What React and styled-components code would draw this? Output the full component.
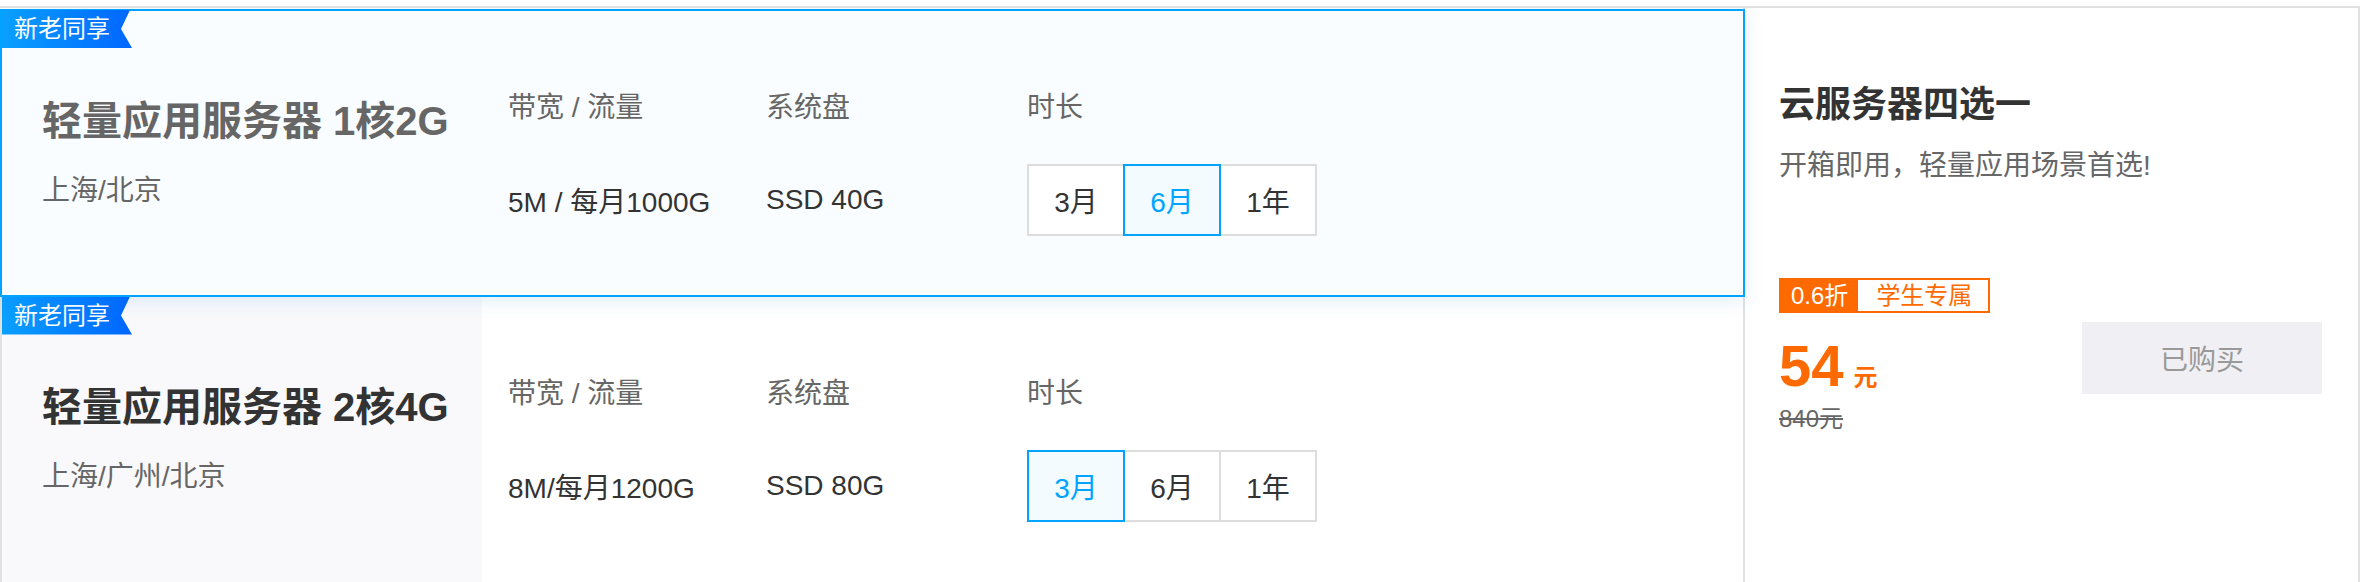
import React from "react";
import styled, { createGlobalStyle } from "styled-components";

const GlobalStyle = createGlobalStyle`
  body {
    margin: 0;
    background: #ffffff;
    font-family: "Liberation Sans", "Noto Sans CJK SC", sans-serif;
    color: #333333;
  }
`;

const Page = styled.div`
  display: flex;
  width: 2360px;
  height: 576px;
  margin-top: 6px;
  border-top: 2px solid #e1e1e1;
  box-sizing: border-box;
  overflow: hidden;
`;

const List = styled.div`
  display: flex;
  flex-direction: column;
  width: 1743px;
  flex-shrink: 0;
`;

const Card = styled.div`
  position: relative;
  display: flex;
  box-sizing: border-box;
  height: ${({ $active }) => ($active ? "289px" : "287px")};
  margin: ${({ $active }) => ($active ? "1px -2px 0 0" : "0")};
  border: ${({ $active }) => ($active ? "2px solid #00a4ff" : "none")};
  border-left: 2px solid ${({ $active }) => ($active ? "#00a4ff" : "#e1e1e1")};
  background: ${({ $active }) => ($active ? "#fafdff" : "#ffffff")};
  box-shadow: ${({ $active }) => ($active ? "0 4px 18px rgba(0, 120, 220, 0.12)" : "none")};
  z-index: ${({ $active }) => ($active ? 2 : 1)};
`;

const Badge = styled.div`
  position: absolute;
  top: ${({ $active }) => ($active ? "-1px" : "0")};
  left: 0;
  width: 130px;
  height: 38px;
  padding-left: 12px;
  box-sizing: border-box;
  background: linear-gradient(90deg, #0aa0ff 0%, #0066ff 100%);
  clip-path: polygon(0 0, 128px 0, 119px 50%, 130px 100%, 0 100%);
  color: #ffffff;
  font-size: 24px;
  line-height: 38px;
`;

const InfoCol = styled.div`
  width: 480px;
  flex-shrink: 0;
  box-sizing: border-box;
  padding: 82px 0 0 40px;
  background: ${({ $active }) => ($active ? "transparent" : "#f9f9fb")};
`;

const Title = styled.div`
  font-size: 40px;
  line-height: 56px;
  font-weight: 600;
  color: ${({ $active }) => ($active ? "#666666" : "#333333")};
  white-space: nowrap;
`;

const Region = styled.div`
  margin-top: 22px;
  font-size: 28px;
  line-height: 40px;
  color: #666666;
`;

const Specs = styled.div`
  display: flex;
  padding: 77px 0 0 26px;
`;

const SpecCol = styled.div`
  width: ${({ $w }) => ($w ? `${$w}px` : "auto")};
  flex-shrink: 0;
`;

const SpecLabel = styled.div`
  font-size: 28px;
  line-height: 40px;
  color: #666666;
  white-space: nowrap;
`;

const SpecValue = styled.div`
  display: flex;
  align-items: center;
  height: 72px;
  margin-top: 36px;
  font-size: 28px;
  color: #333333;
  white-space: nowrap;
`;

const DurationGroup = styled.div`
  display: flex;
`;

const DurationBtn = styled.button`
  position: relative;
  width: 98px;
  height: 72px;
  margin: 0 0 0 -2px;
  padding: 0;
  box-sizing: border-box;
  border: 2px solid ${({ $selected }) => ($selected ? "#00a4ff" : "#dddddd")};
  background: ${({ $selected }) => ($selected ? "#f3fbff" : "#ffffff")};
  color: ${({ $selected }) => ($selected ? "#00a4ff" : "#333333")};
  font-family: inherit;
  font-size: 28px;
  z-index: ${({ $selected }) => ($selected ? 1 : 0)};
  cursor: pointer;

  &:first-child {
    margin-left: 0;
  }
`;

const Panel = styled.div`
  flex: 1;
  box-sizing: border-box;
  border-left: 2px solid #e1e1e1;
  border-right: 2px solid #e1e1e1;
  padding: 72px 36px 0 34px;
  background: #ffffff;
`;

const PanelTitle = styled.div`
  font-size: 36px;
  line-height: 50px;
  font-weight: 600;
  color: #333333;
`;

const PanelDesc = styled.div`
  margin-top: 16px;
  font-size: 28px;
  line-height: 40px;
  color: #666666;
`;

const BuyArea = styled.div`
  display: flex;
  justify-content: space-between;
  align-items: flex-start;
  margin-top: 92px;
`;

const Tag = styled.div`
  display: inline-flex;
  height: 35px;
  box-sizing: border-box;
  border: 2px solid #ff6a00;
  font-size: 24px;
  line-height: 31px;
`;

const TagStrong = styled.span`
  padding: 0 10px;
  background: #ff6a00;
  color: #ffffff;
`;

const TagText = styled.span`
  padding: 0 16px 0 18px;
  background: #ffffff;
  color: #ff6a00;
`;

const Price = styled.div`
  height: 58px;
  margin-top: 24px;
  color: #ff6a00;
  font-size: 58px;
  line-height: 58px;
  font-weight: 600;
  white-space: nowrap;
`;

const Unit = styled.span`
  margin-left: 10px;
  font-size: 24px;
  line-height: 24px;
  font-weight: 600;
`;

const Original = styled.div`
  margin-top: 8px;
  font-size: 24px;
  line-height: 32px;
  color: #666666;
  text-decoration: line-through;
`;

const BuyButton = styled.button`
  width: 240px;
  height: 72px;
  margin-top: 44px;
  border: none;
  background: #f0f0f4;
  color: #999999;
  font-family: inherit;
  font-size: 28px;
`;

const plans = [
  {
    name: "轻量应用服务器 1核2G",
    regions: "上海/北京",
    traffic: "5M / 每月1000G",
    disk: "SSD 40G",
    selected: "6月",
    active: true,
  },
  {
    name: "轻量应用服务器 2核4G",
    regions: "上海/广州/北京",
    traffic: "8M/每月1200G",
    disk: "SSD 80G",
    selected: "3月",
    active: false,
  },
];

const durations = ["3月", "6月", "1年"];

export default function App() {
  return (
    <>
      <GlobalStyle />
      <Page>
        <List>
          {plans.map((plan) => (
            <Card key={plan.name} $active={plan.active}>
              <Badge $active={plan.active}>新老同享</Badge>
              <InfoCol $active={plan.active}>
                <Title $active={plan.active}>{plan.name}</Title>
                <Region>{plan.regions}</Region>
              </InfoCol>
              <Specs>
                <SpecCol $w={258}>
                  <SpecLabel>带宽 / 流量</SpecLabel>
                  <SpecValue>{plan.traffic}</SpecValue>
                </SpecCol>
                <SpecCol $w={261}>
                  <SpecLabel>系统盘</SpecLabel>
                  <SpecValue>{plan.disk}</SpecValue>
                </SpecCol>
                <SpecCol>
                  <SpecLabel>时长</SpecLabel>
                  <SpecValue>
                    <DurationGroup>
                      {durations.map((d) => (
                        <DurationBtn key={d} $selected={d === plan.selected}>
                          {d}
                        </DurationBtn>
                      ))}
                    </DurationGroup>
                  </SpecValue>
                </SpecCol>
              </Specs>
            </Card>
          ))}
        </List>
        <Panel>
          <PanelTitle>云服务器四选一</PanelTitle>
          <PanelDesc>开箱即用，轻量应用场景首选!</PanelDesc>
          <BuyArea>
            <div>
              <Tag>
                <TagStrong>0.6折</TagStrong>
                <TagText>学生专属</TagText>
              </Tag>
              <Price>
                54<Unit>元</Unit>
              </Price>
              <Original>840元</Original>
            </div>
            <BuyButton>已购买</BuyButton>
          </BuyArea>
        </Panel>
      </Page>
    </>
  );
}
